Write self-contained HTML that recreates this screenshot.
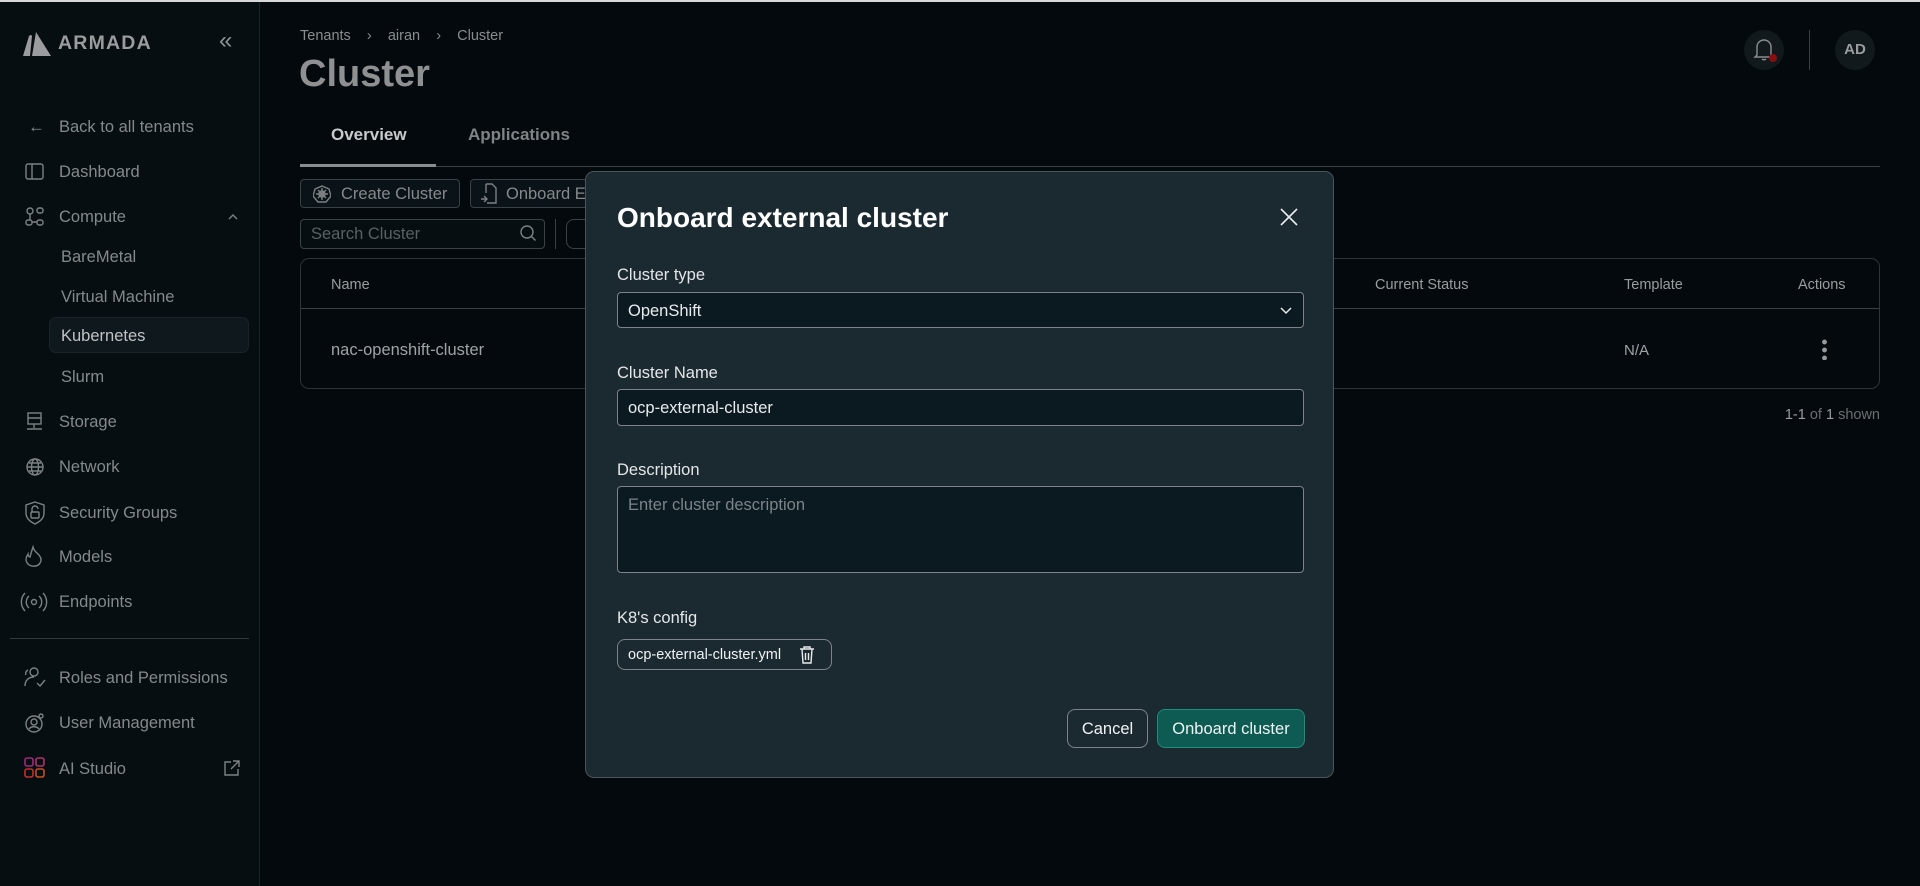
<!DOCTYPE html>
<html><head><meta charset="utf-8"><style>
*{box-sizing:border-box;margin:0;padding:0}
body{width:1920px;height:886px;overflow:hidden;background:#03090c;font-family:"Liberation Sans",sans-serif;position:relative;color:#8a8e90}
.topline{position:absolute;left:0;top:0;width:1920px;height:2px;background:#d8d8d8}
.side{position:absolute;left:0;top:2px;width:260px;height:884px;background:#060e12;border-right:1px solid #1d2428}
.a{position:absolute;white-space:nowrap}
.si{font-size:16.5px;color:#85898b;margin-top:2px}
.ic{position:absolute;stroke:#7d8183;fill:none;stroke-width:1.4}
.modal{position:absolute;left:585px;top:171px;width:749px;height:607px;background:#1b2a31;border:1px solid #4a5459;border-radius:9px}
.lbl{position:absolute;left:31px;font-size:16.5px;color:#e4e6e7;margin-top:2px}
.fld{position:absolute;left:31px;width:687px;background:#0b1a21;border:1px solid #7b8488;border-radius:4px;font-size:16.5px;color:#e9ebec;padding-left:10px}
</style></head><body>
<div class="topline"></div>
<div class="side">
 <svg class="a" style="left:20px;top:28px" width="34" height="28" viewBox="0 0 34 28"><path d="M3 26 L9 6 Q11 4 12 6 L10 26 Z M12 26 L16 2 L31 26 Z" fill="#9a9c9d"/></svg>
 <div class="a" style="left:58px;top:30px;font-size:19.5px;font-weight:bold;letter-spacing:1.2px;color:#9a9c9d">ARMADA</div>
 <div class="a" style="left:219px;top:25px;font-size:24px;color:#8d9193">«</div>
 <div class="a si" style="left:28px;top:114px">←</div>
 <div class="a si" style="left:59px;top:114px">Back to all tenants</div>
 <svg class="ic" style="left:25px;top:160px" width="20" height="20"><rect x="1" y="2" width="17" height="15" rx="2"/><path d="M7 2v15"/></svg>
 <div class="a si" style="left:59px;top:159px">Dashboard</div>
 <svg class="ic" style="left:25px;top:205px" width="20" height="20"><circle cx="5" cy="4" r="3"/><rect x="12" y="1" width="6" height="5" rx="2"/><rect x="1" y="13" width="6" height="5" rx="2"/><rect x="12" y="13" width="6" height="5" rx="2"/><path d="M5 7v6M7 15h5"/></svg>
 <div class="a si" style="left:59px;top:204px">Compute</div>
 <svg class="ic" style="left:227px;top:211px" width="12" height="8"><path d="M2 6l4-4 4 4"/></svg>
 <div class="a si" style="left:61px;top:244px">BareMetal</div>
 <div class="a si" style="left:61px;top:284px">Virtual Machine</div>
 <div class="a" style="left:49px;top:315px;width:200px;height:36px;background:#0f181c;border:1px solid #1a2328;border-radius:7px"></div>
 <div class="a si" style="left:61px;top:323px;color:#c0c3c5">Kubernetes</div>
 <div class="a si" style="left:61px;top:364px">Slurm</div>
 <svg class="ic" style="left:25px;top:410px" width="20" height="20"><rect x="3" y="1" width="13" height="11"/><path d="M3 6h13M9 12v4M2 17h15"/></svg>
 <div class="a si" style="left:59px;top:409px">Storage</div>
 <svg class="ic" style="left:25px;top:455px" width="20" height="20"><circle cx="10" cy="10" r="8"/><ellipse cx="10" cy="10" rx="3.5" ry="8"/><path d="M2 10h16M4 6h12M4 14h12"/></svg>
 <div class="a si" style="left:59px;top:454px">Network</div>
 <svg class="ic" style="left:24px;top:499px" width="22" height="24"><path d="M11 1L20 4v8c0 6-5 9-9 11C7 21 2 18 2 12V4z"/><rect x="7" y="11" width="8" height="6" rx="1"/><path d="M8 11V8a3 3 0 016 0"/></svg>
 <div class="a si" style="left:59px;top:500px">Security Groups</div>
 <svg class="ic" style="left:24px;top:543px" width="22" height="24"><path d="M9 2c1 4 3 5 5 7 3 3 4 6 2 9-2 4-9 4-12 1-3-3-2-7 0-10 0 2 1 3 2 3 1-4 2-7 3-10z"/></svg>
 <div class="a si" style="left:59px;top:544px">Models</div>
 <svg class="ic" style="left:20px;top:589px" width="28" height="22"><circle cx="14" cy="11" r="2.5"/><path d="M9 5a8 8 0 000 12M19 5a8 8 0 010 12M5 2a13 13 0 000 18M23 2a13 13 0 010 18"/></svg>
 <div class="a si" style="left:59px;top:589px">Endpoints</div>
 <div class="a" style="left:10px;top:636px;width:239px;height:1px;background:#34393c"></div>
 <svg class="ic" style="left:22px;top:664px" width="26" height="24"><circle cx="12" cy="6" r="4"/><path d="M3 20c0-6 4-9 9-9M6 4c-2 1-3 3-2 5M15 17l3 3 5-6"/></svg>
 <div class="a si" style="left:59px;top:665px">Roles and Permissions</div>
 <svg class="ic" style="left:24px;top:711px" width="22" height="22"><circle cx="10" cy="11" r="8"/><circle cx="10" cy="9" r="3"/><path d="M5 16c2-3 8-3 10 0"/><circle cx="17" cy="3" r="2"/></svg>
 <div class="a si" style="left:59px;top:710px">User Management</div>
 <svg class="a" style="left:24px;top:755px" width="22" height="22" fill="none" stroke-width="1.6"><rect x="1" y="1" width="8" height="8" rx="2" stroke="#9b2a7a"/><rect x="12" y="1" width="8" height="8" rx="2" stroke="#b0306a"/><rect x="1" y="12" width="8" height="8" rx="2" stroke="#c0302a"/><rect x="12" y="12" width="8" height="8" rx="2" stroke="#c45020"/></svg>
 <div class="a si" style="left:59px;top:756px">AI Studio</div>
 <svg class="ic" style="left:223px;top:757px" width="18" height="18"><path d="M8 3H2v13h13v-6M10 2h6v6M16 2L8 10"/></svg>
</div>

<div class="a" style="left:300px;top:28px;font-size:14.5px;color:#8a8d8f">Tenants&nbsp;&nbsp;&nbsp;&nbsp;›&nbsp;&nbsp;&nbsp;&nbsp;airan&nbsp;&nbsp;&nbsp;&nbsp;›&nbsp;&nbsp;&nbsp;&nbsp;Cluster</div>
<div class="a" style="left:299px;top:53px;font-size:38px;font-weight:bold;color:#8e9091">Cluster</div>
<div class="a" style="left:331px;top:125px;font-size:17px;font-weight:bold;color:#c8cacb">Overview</div>
<div class="a" style="left:468px;top:125px;font-size:17px;font-weight:bold;color:#7f8385">Applications</div>
<div class="a" style="left:300px;top:166px;width:1580px;height:1px;background:#3a4043"></div>
<div class="a" style="left:300px;top:164px;width:136px;height:3px;background:#8a8d8f"></div>
<div class="a" style="left:300px;top:179px;width:160px;height:29px;border:1px solid #3b4245;border-radius:4px;background:#0a1317"></div>
<svg class="ic" style="left:313px;top:185px" width="18" height="18"><path d="M9 1l7 3 2 7-5 6H5L0 11l2-7z"/><circle cx="9" cy="9" r="3"/><path d="M9 3v12M3 9h12M5 5l8 8M13 5l-8 8"/></svg>
<div class="a" style="left:341px;top:185px;font-size:16.5px;color:#85898b">Create Cluster</div>
<div class="a" style="left:470px;top:179px;width:120px;height:29px;border:1px solid #3b4245;border-radius:4px;background:#0a1317"></div>
<svg class="ic" style="left:480px;top:183px" width="18" height="22"><path d="M6 1h6l4 4v15H7M1 16h6M4 13l3 3-3 3M6 1v9"/></svg>
<div class="a" style="left:506px;top:185px;font-size:16.5px;color:#85898b">Onboard E</div>
<div class="a" style="left:300px;top:219px;width:245px;height:30px;border:1px solid #3b4245;border-radius:4px;background:#060e12"></div>
<div class="a" style="left:311px;top:225px;font-size:16.5px;color:#5b6062">Search Cluster</div>
<svg class="ic" style="left:519px;top:224px" width="18" height="18"><circle cx="8" cy="8" r="6"/><path d="M12.5 12.5l4 4"/></svg>
<div class="a" style="left:555px;top:219px;width:1px;height:30px;background:#3b4245"></div>
<div class="a" style="left:566px;top:219px;width:40px;height:30px;border:1px solid #3b4245;border-radius:8px"></div>
<div class="a" style="left:300px;top:258px;width:1580px;height:131px;border:1px solid #2e3437;border-radius:9px;background:#03090c"></div>
<div class="a" style="left:301px;top:308px;width:1578px;height:1px;background:#3a4043"></div>
<div class="a" style="left:331px;top:277px;font-size:14.5px;color:#9a9d9f">Name</div>
<div class="a" style="left:1375px;top:277px;font-size:14.5px;color:#9a9d9f">Current Status</div>
<div class="a" style="left:1624px;top:277px;font-size:14.5px;color:#9a9d9f">Template</div>
<div class="a" style="left:1798px;top:277px;font-size:14.5px;color:#9a9d9f">Actions</div>
<div class="a" style="left:331px;top:341px;font-size:16.5px;color:#a0a3a5">nac-openshift-cluster</div>
<div class="a" style="left:1624px;top:342px;font-size:15px;color:#a0a3a5">N/A</div>
<div class="a" style="left:1822px;top:338px;width:5px;height:22px;background:radial-gradient(circle,#999 2.2px,transparent 2.6px) 0 0/5px 8px repeat-y"></div>
<div class="a" style="left:1780px;top:407px;font-size:14.5px;color:#6a6e70;text-align:right;width:100px"><span style="color:#9a9d9f">1-1</span> of <span style="color:#9a9d9f">1</span> shown</div>
<div class="a" style="left:1744px;top:30px;width:40px;height:40px;border-radius:50%;background:#12191d"></div>
<svg class="ic" style="left:1753px;top:37px;stroke:#8a8e90" width="22" height="26"><path d="M4 18V10a7 7 0 0114 0v8l2 2H2zM9 22c1 1 3 1 4 0"/></svg>
<div class="a" style="left:1769px;top:54px;width:8px;height:8px;border-radius:50%;background:#8a0e0e"></div>
<div class="a" style="left:1809px;top:30px;width:1px;height:40px;background:#3a4043"></div>
<div class="a" style="left:1835px;top:30px;width:40px;height:40px;border-radius:50%;background:#12191d;color:#9a9d9f;font-size:15px;font-weight:bold;text-align:center;line-height:40px">AD</div>

<div class="modal">
 <div class="a" style="left:31px;top:30px;font-size:28px;font-weight:bold;color:#fff">Onboard external cluster</div>
 <svg class="a" style="left:694px;top:36px" width="18" height="18" stroke="#e8eaeb" stroke-width="1.6"><path d="M1 1l16 16M17 1L1 17"/></svg>
 <div class="lbl" style="top:92px">Cluster type</div>
 <div class="fld" style="top:120px;height:36px;line-height:36px">OpenShift</div>
 <svg class="a" style="left:693px;top:134px" width="14" height="9" fill="none" stroke="#e8eaeb" stroke-width="1.5"><path d="M2 2l5 5 5-5"/></svg>
 <div class="lbl" style="top:190px">Cluster Name</div>
 <div class="fld" style="top:217px;height:37px;line-height:37px">ocp-external-cluster</div>
 <div class="lbl" style="top:287px">Description</div>
 <div class="fld" style="top:314px;height:87px;padding-top:9px;color:#7b8488">Enter cluster description</div>
 <div class="lbl" style="top:435px">K8's config</div>
 <div class="a" style="left:31px;top:467px;width:215px;height:31px;border:1px solid #7b8488;border-radius:8px;font-size:14.5px;color:#f0f2f3;padding-left:10px;line-height:30px">ocp-external-cluster.yml</div>
 <svg class="a" style="left:213px;top:473px" width="16" height="19" fill="none" stroke="#e8eaeb" stroke-width="1.4"><path d="M1 4h14M5 4V2h6v2M3 4l1 14h8l1-14M6.5 8v7M9.5 8v7"/></svg>
 <div class="a" style="left:481px;top:537px;width:81px;height:39px;border:1px solid #7b8488;border-radius:8px;color:#f0f2f3;font-size:16.5px;text-align:center;line-height:39px">Cancel</div>
 <div class="a" style="left:571px;top:537px;width:148px;height:39px;border:1px solid #1f8c7c;background:#0d5b52;border-radius:8px;color:#f0f2f3;font-size:16.5px;text-align:center;line-height:39px">Onboard cluster</div>
</div>
</body></html>
